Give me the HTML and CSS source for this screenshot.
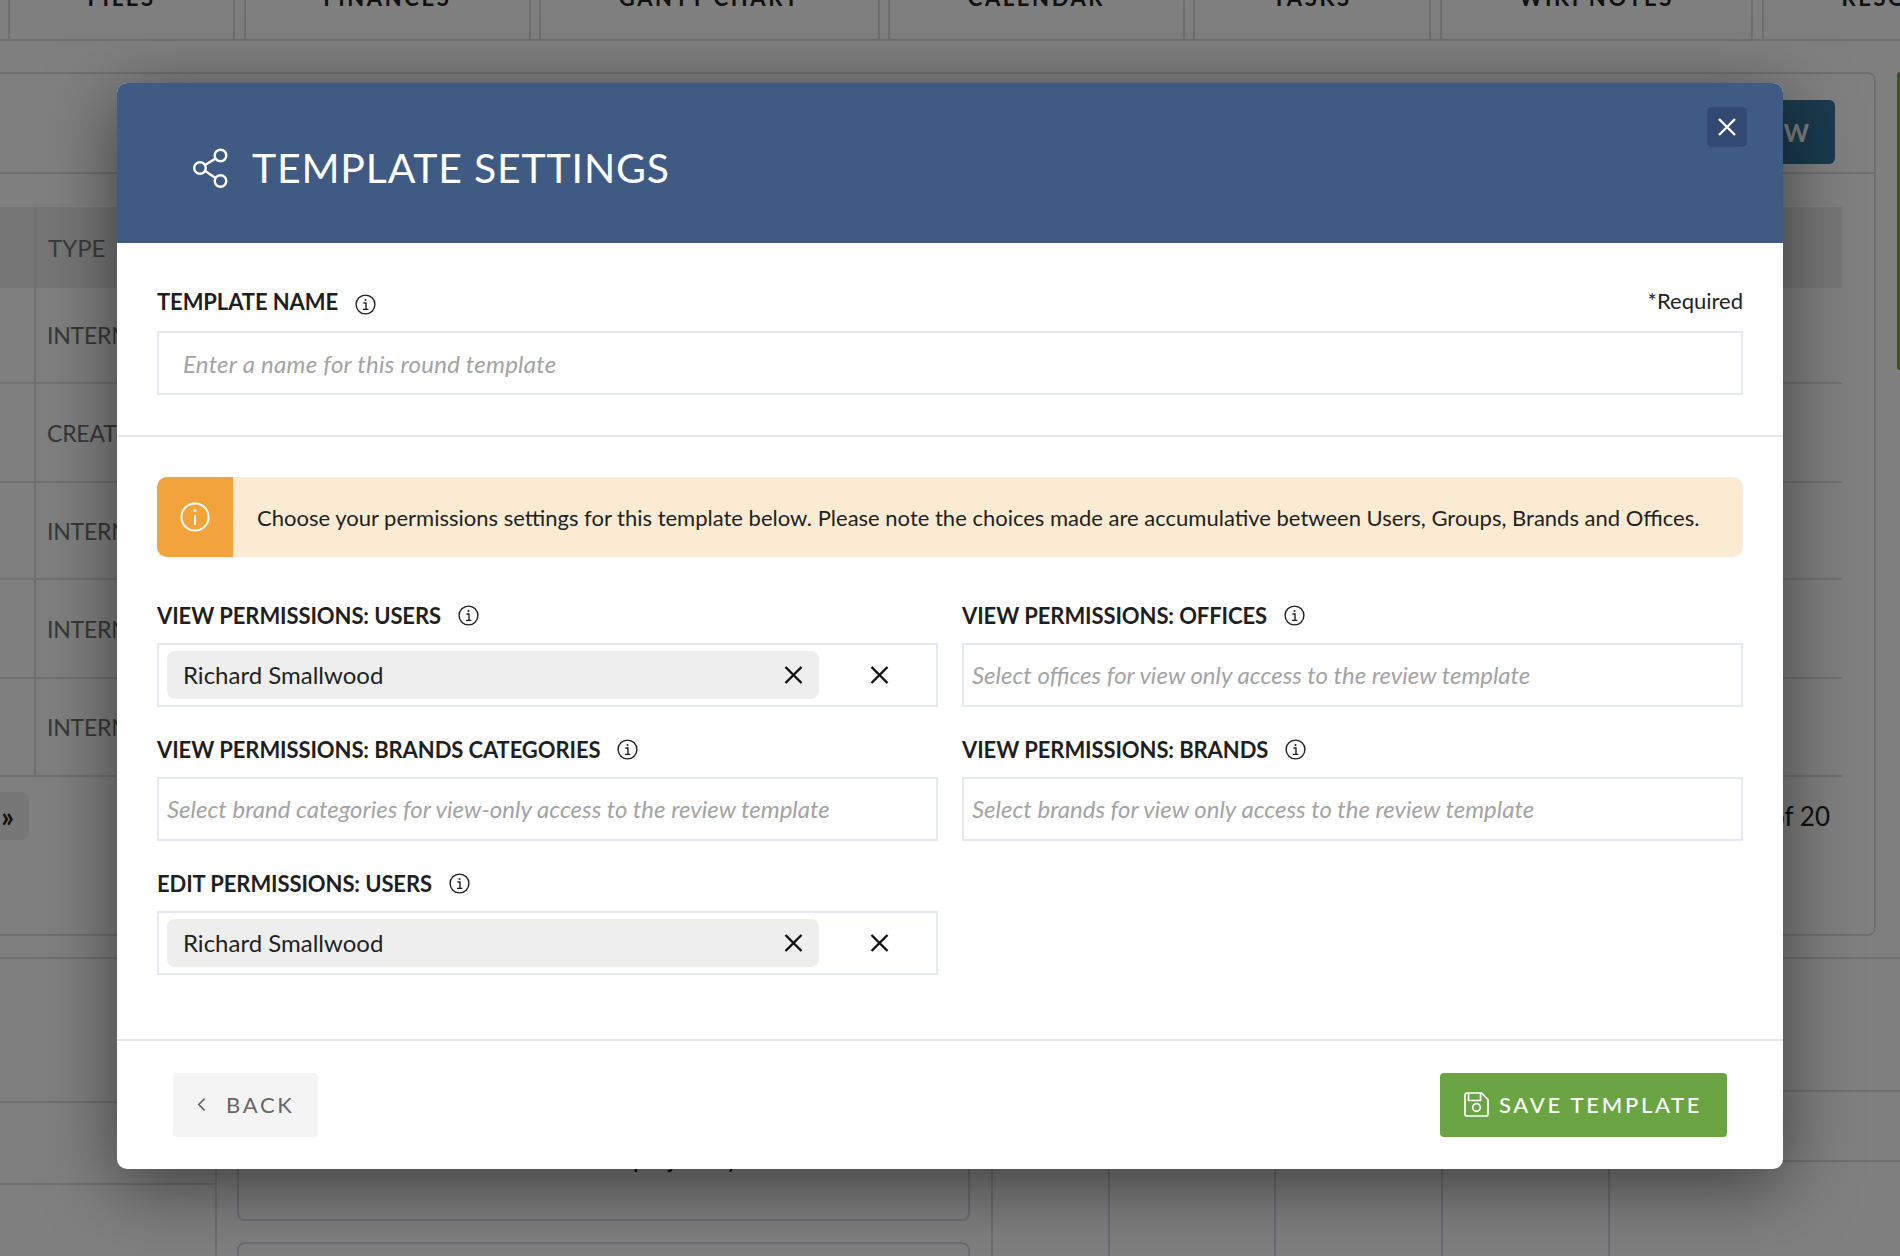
FILE: index.html
```html
<!DOCTYPE html>
<html lang="en">
<head>
<meta charset="utf-8">
<title>Template settings</title>
<link rel="stylesheet" href="styles.css">
</head>
<body>
<div class="page">
  <nav class="tabs">
    <div class="tab">FILES</div>
    <div class="tab">FINANCES</div>
    <div class="tab">GANTT CHART</div>
    <div class="tab">CALENDAR</div>
    <div class="tab">TASKS</div>
    <div class="tab">WIKI NOTES</div>
    <div class="tab">RESOURCES</div>
  </nav>
  <section class="card">
    <div class="card-head"><div class="new-btn">ADD NEW</div></div>
    <div class="table">
      <div class="row head-row"><div class="gutter"></div><div class="cell head-cell">TYPE</div></div>
      <div class="row r96"><div class="gutter"></div><div class="cell">INTERNAL</div></div>
      <div class="row r99"><div class="gutter"></div><div class="cell">CREATIVE</div></div>
      <div class="row r97"><div class="gutter"></div><div class="cell">INTERNAL</div></div>
      <div class="row r99"><div class="gutter"></div><div class="cell">INTERNAL</div></div>
      <div class="row r98"><div class="gutter"></div><div class="cell">INTERNAL</div></div>
    </div>
    <div class="pager">
      <div class="pager-btn">»</div>
      <div class="pager-text">1 of 20</div>
    </div>
  </section>
  <section class="lower">
    <div class="side">
      <div class="side-a"></div>
      <div class="side-b"></div>
    </div>
    <div class="boxes">
      <div class="box box-a">project by</div>
      <div class="box box-b"></div>
    </div>
    <div class="cols">
      <div class="col w117"><span class="digit">2</span></div>
      <div class="col w166"></div>
      <div class="col w167"></div>
      <div class="col w167"></div>
      <div class="col w166"></div>
      <div class="col-last"></div>
    </div>
  </section>
</div>
<div class="green-edge"></div>

<div class="overlay">
  <div class="modal">
    <header class="modal-head">
      <svg class="share" viewBox="0 0 36 40" width="36" height="40" fill="none" stroke="#fff" stroke-width="2.4">
        <circle cx="27.5" cy="7.5" r="5.8"/>
        <circle cx="7" cy="20" r="5.8"/>
        <circle cx="27.5" cy="33" r="5.8"/>
        <path d="M12 17 22.6 10.5M12 23 22.6 30"/>
      </svg>
      <h1 class="title">TEMPLATE SETTINGS</h1>
      <button class="close" aria-label="Close">
        <svg viewBox="0 0 18 18" width="18" height="18" fill="none" stroke="#fff" stroke-width="2.4"><path d="M1 1 17 17M17 1 1 17"/></svg>
      </button>
    </header>

    <div class="name-block">
      <div class="name-row">
        <label class="label">TEMPLATE NAME
          <svg class="info info-low" viewBox="0 0 21 21" width="21" height="21" fill="none" stroke="#1f1f1f" stroke-width="1.4"><circle cx="10.5" cy="10.5" r="9.4"/><circle cx="10.5" cy="5.9" r="1" fill="#1f1f1f" stroke="none"/><path d="M8.4 9h2.6v6.3M8 15.4h5.4"/></svg>
        </label>
        <span class="required">*Required</span>
      </div>
      <input class="field name-input" placeholder="Enter a name for this round template">
    </div>

    <div class="perm-block">
      <div class="notice">
        <div class="notice-icon">
          <svg viewBox="0 0 30 30" width="30" height="30" fill="none" stroke="#fff" stroke-width="2"><circle cx="15" cy="15" r="13.6"/><circle cx="15" cy="8.6" r="1.5" fill="#fff" stroke="none"/><path d="M15 13v10"/></svg>
        </div>
        <p class="notice-text">Choose your permissions settings for this template below. Please note the choices made are accumulative between Users, Groups, Brands and Offices.</p>
      </div>

      <div class="grid">
        <div class="group">
          <label class="label">VIEW PERMISSIONS: USERS
            <svg class="info" viewBox="0 0 21 21" width="21" height="21" fill="none" stroke="#1f1f1f" stroke-width="1.4"><circle cx="10.5" cy="10.5" r="9.4"/><circle cx="10.5" cy="5.9" r="1" fill="#1f1f1f" stroke="none"/><path d="M8.4 9h2.6v6.3M8 15.4h5.4"/></svg>
          </label>
          <div class="field multi">
            <div class="chip"><span>Richard Smallwood</span>
              <svg viewBox="0 0 18 18" width="19" height="18" fill="none" stroke="#111" stroke-width="2.4"><path d="M1 1 17 17M17 1 1 17"/></svg>
            </div>
            <svg class="clear" viewBox="0 0 18 18" width="19" height="18" fill="none" stroke="#111" stroke-width="2.4"><path d="M1 1 17 17M17 1 1 17"/></svg>
          </div>
        </div>
        <div class="group">
          <label class="label">VIEW PERMISSIONS: OFFICES
            <svg class="info" viewBox="0 0 21 21" width="21" height="21" fill="none" stroke="#1f1f1f" stroke-width="1.4"><circle cx="10.5" cy="10.5" r="9.4"/><circle cx="10.5" cy="5.9" r="1" fill="#1f1f1f" stroke="none"/><path d="M8.4 9h2.6v6.3M8 15.4h5.4"/></svg>
          </label>
          <input class="field select-input" placeholder="Select offices for view only access to the review template">
        </div>
        <div class="group">
          <label class="label">VIEW PERMISSIONS: BRANDS CATEGORIES
            <svg class="info" viewBox="0 0 21 21" width="21" height="21" fill="none" stroke="#1f1f1f" stroke-width="1.4"><circle cx="10.5" cy="10.5" r="9.4"/><circle cx="10.5" cy="5.9" r="1" fill="#1f1f1f" stroke="none"/><path d="M8.4 9h2.6v6.3M8 15.4h5.4"/></svg>
          </label>
          <input class="field select-input" placeholder="Select brand categories for view-only access to the review template">
        </div>
        <div class="group">
          <label class="label">VIEW PERMISSIONS: BRANDS
            <svg class="info" viewBox="0 0 21 21" width="21" height="21" fill="none" stroke="#1f1f1f" stroke-width="1.4"><circle cx="10.5" cy="10.5" r="9.4"/><circle cx="10.5" cy="5.9" r="1" fill="#1f1f1f" stroke="none"/><path d="M8.4 9h2.6v6.3M8 15.4h5.4"/></svg>
          </label>
          <input class="field select-input" placeholder="Select brands for view only access to the review template">
        </div>
        <div class="group">
          <label class="label">EDIT PERMISSIONS: USERS
            <svg class="info" viewBox="0 0 21 21" width="21" height="21" fill="none" stroke="#1f1f1f" stroke-width="1.4"><circle cx="10.5" cy="10.5" r="9.4"/><circle cx="10.5" cy="5.9" r="1" fill="#1f1f1f" stroke="none"/><path d="M8.4 9h2.6v6.3M8 15.4h5.4"/></svg>
          </label>
          <div class="field multi">
            <div class="chip"><span>Richard Smallwood</span>
              <svg viewBox="0 0 18 18" width="19" height="18" fill="none" stroke="#111" stroke-width="2.4"><path d="M1 1 17 17M17 1 1 17"/></svg>
            </div>
            <svg class="clear" viewBox="0 0 18 18" width="19" height="18" fill="none" stroke="#111" stroke-width="2.4"><path d="M1 1 17 17M17 1 1 17"/></svg>
          </div>
        </div>
      </div>
    </div>

    <footer class="modal-foot">
      <button class="btn back">
        <svg viewBox="0 0 10 16" width="9" height="15" fill="none" stroke="#666" stroke-width="1.8"><path d="M8.5 1.5 2 8l6.5 6.5"/></svg>
        BACK
      </button>
      <button class="btn save">
        <svg viewBox="0 0 25 25" width="25" height="25" fill="none" stroke="#fff" stroke-width="1.7"><path d="M3 1h14.5L24 7.500V22a2 2 0 0 1-2 2H3a2 2 0 0 1-2-2V3a2 2 0 0 1 2-2z"/><path d="M4.500 1v7.500h12V1"/><circle cx="12.500" cy="15.500" r="3.800"/></svg>
        SAVE TEMPLATE
      </button>
    </footer>
  </div>
</div>
</body>
</html>
```

FILE: styles.css
```css
* { box-sizing: border-box; }
html, body { margin: 0; height: 1256px; overflow: hidden; }
body { position: relative; background: #fff; font-family: "Lato", "Liberation Sans", sans-serif; color: #222; }

/* background page */
.page { margin-top: -44px; height: 1300px; overflow: hidden; }
.tabs { display: flex; gap: 8.500px; padding-left: 8px; height: 85px; border-bottom: 2px solid #dedee4; white-space: nowrap; overflow: hidden; }
.tab { flex: none; display: flex; align-items: center; padding: 0 77.500px; border: solid #dedee4; border-width: 0 2px; font-size: 22px; font-weight: 700; letter-spacing: 2.600px; color: #222; }

.card { margin: 31px 24px 0 -24px; height: 864px; border: 2px solid #dedee4; border-radius: 8px; }
.card-head { display: flex; justify-content: flex-end; align-items: center; height: 100px; padding: 18px 39px 0 0; border-bottom: 2px solid #dedee4; }
.new-btn { width: 200px; height: 64px; display: flex; align-items: center; justify-content: flex-end; padding-right: 24px; background: #34749c; border-radius: 6px; color: #fff; font-size: 24px; font-weight: 700; letter-spacing: 2px; }
.table { margin: 33px 32px 0 22px; }
.row { display: flex; align-items: center; border-bottom: 2px solid #e2e2e6; font-size: 23px; color: #6f6f6f; white-space: nowrap; }
.head-row { height: 81px; background: #ececec; border-bottom: 0; color: #777; }
.r96 { height: 96px; }
.r97 { height: 97px; }
.r98 { height: 98px; }
.r99 { height: 99px; }
.gutter { width: 36px; align-self: stretch; border-right: 2px solid #e2e2e6; }
.cell { padding-left: 11px; letter-spacing: -.2px; }
.head-cell { padding-left: 12px; font-size: 24px; letter-spacing: 0; }
.pager { display: flex; justify-content: space-between; margin: 15px 22px 0 0; height: 48px; }
.pager-btn { width: 51px; height: 48px; display: flex; align-items: center; justify-content: flex-end; padding-right: 15px; background: #eee; border-radius: 8px; font-size: 28px; font-weight: 700; color: #222; }
.pager-text { align-self: center; font-size: 26px; color: #222; margin-right: 22px; }

.lower { display: flex; margin-top: 21px; border-top: 2px solid #dedee4; height: 330px; }
.side { width: 217px; flex: none; border-right: 2px solid #dedee4; }
.side-a { height: 144px; border-bottom: 2px solid #dedee4; }
.side-b { height: 82px; border-bottom: 2px solid #dedee4; }
.boxes { width: 753px; flex: none; padding: 0 0 0 20px; }
.box { border: 2px solid #d6dae0; border-radius: 8px; width: 733px; }
.box-a { height: 262px; border-top: 0; padding: 185px 0 0 394px; font-size: 24px; color: #111; }
.box-b { height: 100px; margin-top: 21px; }
.cols { flex: 1; display: flex; margin-left: 21px; }
.col { flex: none; border-left: 2px solid #d6dae0; }
.w117 { width: 117px; padding: 183px 0 0 82px; font-size: 24px; color: #000; }
.w166 { width: 166px; }
.w167 { width: 167px; }
.col-last { flex: 1; border-left: 2px solid #d6dae0; height: 203px; background: linear-gradient(#fff 131px, #dedee4 131px, #dedee4 133px, #fff 133px, #fff 201px, #dedee4 201px); }
.green-edge { position: absolute; right: 0; top: 72px; width: 3px; height: 298px; background: #6cab46; border-radius: 3px 0 0 3px; }

/* overlay + modal */
.overlay { position: absolute; inset: 0; background: rgba(0, 0, 0, .5); display: flex; justify-content: center; align-items: flex-start; padding-top: 83px; }
.modal { width: 1666px; height: 1086px; background: #fff; border-radius: 10px; box-shadow: 0 16px 70px rgba(0, 0, 0, .5); overflow: hidden; display: flex; flex-direction: column; position: relative; }
.modal-head { height: 160px; flex: none; display: flex; align-items: center; gap: 23px; padding: 10px 0 0 76px; background: #3f5a83; color: #fff; }
.title { margin: 0; font-size: 41px; font-weight: 400; line-height: 48px; letter-spacing: .8px; }
.share { flex: none; }
.close { position: absolute; top: 24px; right: 36px; width: 40px; height: 40px; padding: 0; border: 0; border-radius: 5px; background: #324a71; display: flex; align-items: center; justify-content: center; }

.name-block { padding: 44px 40px 40px; border-bottom: 2px solid #e6e6e6; }
.name-row { display: flex; justify-content: space-between; margin-bottom: 14px; }
.label { display: flex; align-items: center; height: 30px; padding-bottom: 2px; font-size: 22px; font-weight: 700; letter-spacing: -.1px; color: #1f1f1f; white-space: nowrap; }
.info { flex: none; margin-left: 17px; }
.info-low { margin-top: 6px; }
.required { font-size: 22px; line-height: 28px; color: #222; }
.field { display: block; width: 100%; height: 64px; border: 2px solid #e6e9f1; background: #fff; padding: 0 8px; font: 400 24px "Lato", sans-serif; color: #222; outline: 0; }
.field::placeholder { font-style: italic; color: #a3a3a3; opacity: 1; }
.name-input { padding-left: 24px; letter-spacing: .25px; }
.select-input { padding-bottom: 2px; }

.perm-block { padding: 40px 40px 0; }
.notice { display: flex; height: 80px; border-radius: 10px; overflow: hidden; background: #fbebd2; margin-bottom: 44px; }
.notice-icon { width: 76px; flex: none; display: flex; align-items: center; justify-content: center; background: #f2a33c; }
.notice-text { margin: 0 0 0 24px; align-self: center; font-size: 22px; color: #222; white-space: nowrap; }
.grid { display: grid; grid-template-columns: 781px 781px; column-gap: 24px; row-gap: 28px; }
.group .label { margin-bottom: 12px; }
.multi { display: flex; align-items: center; padding: 0 47.500px 0 8px; justify-content: space-between; }
.chip { width: 652px; height: 48px; flex: none; margin-top: -1px; display: flex; align-items: center; justify-content: space-between; padding: 0 16px 0 16px; background: #eeeeee; border-radius: 8px; font-size: 24px; color: #222; }
.clear { flex: none; margin-top: -1px; }

.modal-foot { margin-top: auto; height: 130px; flex: none; border-top: 2px solid #e8e8e8; display: flex; justify-content: space-between; padding: 32px 56px; }
.btn { height: 64px; border: 0; border-radius: 4px; font-family: "Lato", sans-serif; font-size: 22px; letter-spacing: 2.700px; display: flex; align-items: center; padding-bottom: 2px !important; }
.back { width: 145px; background: #f4f4f4; color: #666; padding: 0 0 0 24px; gap: 20px; }
.save { width: 287px; background: #6ba543; color: #fff; padding: 0 0 0 24px; gap: 10px; font-weight: 500; }
```
